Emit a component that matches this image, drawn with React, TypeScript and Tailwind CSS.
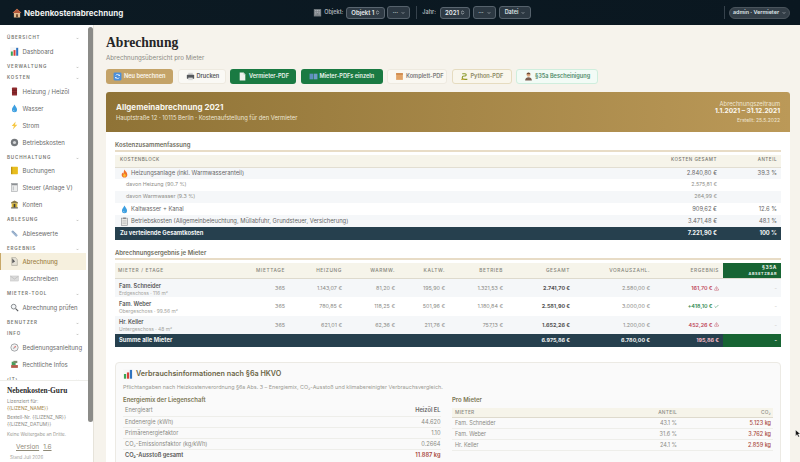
import { Check, ChevronDown, ChevronsUpDown, TriangleAlert } from "lucide-react";
import type { ReactNode } from "react";

const Svg = ({ children, className }: { children: ReactNode; className?: string }) => (
  <svg viewBox="0 0 16 16" className={className ?? "h-[9px] w-[9px] shrink-0"}>
    {children}
  </svg>
);

const Chart = ({ className }: { className?: string }) => (
  <Svg className={className}>
    <rect x="0.500" y="0.500" width="15" height="15" fill="#f6f6f6" />
    <rect x="1.500" y="8" width="3.500" height="7.500" fill="#3aa655" />
    <rect x="6.300" y="5.500" width="3.500" height="10" fill="#d9413a" />
    <rect x="11" y="1.500" width="3.500" height="14" fill="#2f74c0" />
  </Svg>
);
const House = () => (
  <Svg className="h-[10px] w-[10px] shrink-0">
    <path d="M8 1 1 8h2v7h10V8h2z" fill="#e2b98e" />
    <path d="M8 1 1 8h14z" fill="#b4583a" />
    <rect x="6.500" y="10" width="3" height="5" fill="#6d4a2e" />
  </Svg>
);
const Flame = () => (
  <Svg>
    <path d="M8 1c1 3 5 5 5 9a5 5 0 0 1-10 0c0-2 1-3 2-4 0 1 .5 2 1.200 2C6.500 6 7 3 8 1z" fill="#f0702a" />
    <path d="M8 8c1 1 2.500 2 2.500 3.500a2.500 2.500 0 0 1-5 0C5.500 10 7 9.500 8 8z" fill="#fbc02d" />
  </Svg>
);
const Drop = () => (
  <Svg>
    <path d="M8 1c2 3.500 4.500 6 4.500 9a4.500 4.500 0 0 1-9 0C3.500 7 6 4.500 8 1z" fill="#3d9fe0" />
    <path d="M6 10.500a2 2 0 0 0 2 2" stroke="#c4e6fb" strokeWidth="1" fill="none" />
  </Svg>
);
const Bolt = () => (
  <Svg>
    <path d="M10 1 3 9h4l-2 6 8-8.500H9z" fill="#f6c744" />
  </Svg>
);
const Gear = () => (
  <Svg>
    <circle cx="8" cy="8" r="6.500" fill="#74787c" />
    <circle cx="8" cy="8" r="2.800" fill="#d4d6d8" />
  </Svg>
);
const Oil = () => (
  <Svg>
    <rect x="3.500" y="1" width="9" height="14" rx="1" fill="#8f2a2e" />
    <rect x="3.500" y="5" width="9" height="1" fill="#571619" />
    <rect x="3.500" y="10" width="9" height="1" fill="#571619" />
  </Svg>
);
const Ledger = () => (
  <Svg>
    <rect x="2" y="1.500" width="12" height="13" rx="1" fill="#e8bd1e" />
    <rect x="2" y="1.500" width="2" height="13" fill="#b8900f" />
  </Svg>
);
const TaxForm = () => (
  <Svg>
    <rect x="3" y="1" width="10" height="14" fill="#eceded" stroke="#9a9ea2" strokeWidth="1" />
    <rect x="3" y="1" width="10" height="3" fill="#8c9094" />
    <rect x="5" y="6" width="1.500" height="7" fill="#b0b4b8" />
  </Svg>
);
const Vault = () => (
  <Svg>
    <path d="M8 1 2 4v2h12V4z" fill="#8a7a4a" />
    <rect x="3" y="6" width="10" height="7" fill="#d9b635" />
    <rect x="2" y="13" width="12" height="2" fill="#5e5a4e" />
    <rect x="6.500" y="7" width="3" height="6" fill="#40403a" />
  </Svg>
);
const Ruler = () => (
  <Svg>
    <path d="M2 5 5 2l9 9-3 3z" fill="#9cb4d0" />
    <path d="M5 5l1-1M7 7l1-1M9 9l1-1" stroke="#5c7392" strokeWidth="1" />
  </Svg>
);
const Script = () => (
  <Svg>
    <path d="M3 1h7l3 4v10H3z" fill="#e6e2d6" stroke="#8d8a80" strokeWidth="0.800" />
    <path d="M4 2v9l5-3-5-6z" fill="#5c5c5c" />
  </Svg>
);
const Envelope = () => (
  <Svg>
    <rect x="1" y="3.500" width="14" height="9" fill="#dcdcdc" stroke="#bdbdbd" strokeWidth="0.800" />
    <path d="M1 4l7 5 7-5" stroke="#a8a8a8" strokeWidth="0.800" fill="none" />
  </Svg>
);
const Search = () => (
  <Svg>
    <circle cx="6.500" cy="6.500" r="4.200" fill="#f4f6f8" stroke="#74787c" strokeWidth="1.500" />
    <path d="m10 10 4.500 4.500" stroke="#55585c" strokeWidth="2" />
  </Svg>
);
const Compass = () => (
  <Svg>
    <circle cx="8" cy="8" r="6.500" fill="#f2f2f2" stroke="#8b8f93" strokeWidth="1.300" />
    <path d="M11 5 9 9 7 7z" fill="#d9483f" />
    <path d="M5 11l2-4 2 2z" fill="#9aa0a6" />
  </Svg>
);
const Legal = () => (
  <Svg>
    <rect x="2" y="9" width="12" height="5" fill="#b55a4a" />
    <path d="M3 3h7v6H3z" fill="#46a05a" />
    <rect x="6" y="1.500" width="7" height="4" fill="#7b8c6a" />
  </Svg>
);
const Printer = () => (
  <Svg>
    <rect x="4" y="1.500" width="8" height="4" fill="#d4d4d4" />
    <rect x="1.500" y="5" width="13" height="7" rx="1" fill="#55585c" />
    <rect x="4" y="10" width="8" height="4.500" fill="#dcdcdc" />
  </Svg>
);
const Refresh = () => (
  <Svg>
    <rect x="1" y="1" width="14" height="14" rx="2" fill="#4a8fdc" />
    <path d="M11.500 6.500A4 4 0 0 0 4.800 6M4.500 9.500a4 4 0 0 0 6.700.5" stroke="#fff" strokeWidth="1.400" fill="none" />
    <path d="M12 3.800V7H9zM4 12.200V9h3z" fill="#fff" />
  </Svg>
);
const DocWhite = () => (
  <Svg>
    <path d="M3 1h7l3 3.500V15H3z" fill="#eef2ee" />
    <path d="M10 1v3.500h3z" fill="#a9bdaf" />
  </Svg>
);
const Books = () => (
  <Svg>
    <rect x="1" y="3" width="6.500" height="10" fill="#5f8fc0" />
    <rect x="8.500" y="3" width="6.500" height="10" fill="#6f9bc8" />
  </Svg>
);
const Box = () => (
  <Svg>
    <rect x="2" y="2" width="12" height="12" fill="#e2a468" />
    <rect x="2" y="2" width="12" height="3" fill="#cf8b4e" />
  </Svg>
);
const Snake = () => (
  <Svg>
    <path d="M4 3h5a2 2 0 0 1 0 4H7a3 3 0 0 0 0 6h6" stroke="#8a9a2c" strokeWidth="2" fill="none" />
    <path d="M2 13h6" stroke="#c9a93a" strokeWidth="2" />
  </Svg>
);
const Person = () => (
  <Svg>
    <circle cx="8" cy="5" r="3.500" fill="#e0ab85" />
    <path d="M4.500 4a3.500 3 0 0 1 7 0z" fill="#6e4a36" />
    <path d="M2 15c0-4 3-5.500 6-5.500s6 1.500 6 5.500z" fill="#7a5c4e" />
  </Svg>
);
const Building = () => (
  <Svg>
    <rect x="1.500" y="2" width="13" height="13" fill="#7c8287" />
    <path d="M4 4.500h2M7 4.500h2M10 4.500h2M4 7.500h2M7 7.500h2M10 7.500h2M4 10.500h2M10 10.500h2" stroke="#c8ccd0" strokeWidth="1.300" />
  </Svg>
);
const Clipboard = () => (
  <Svg>
    <rect x="2.500" y="2" width="11" height="13" fill="#e8e8e4" stroke="#84868a" strokeWidth="1" />
    <rect x="5.500" y="1" width="5" height="2.500" fill="#84868a" />
    <path d="M4.500 6.500h7M4.500 9h7M4.500 11.500h7" stroke="#a6a8aa" strokeWidth="0.800" />
  </Svg>
);

const navGroups: { label: string; items: { name: string; icon: ReactNode; active?: boolean }[] }[] = [
  { label: "Übersicht", items: [{ name: "Dashboard", icon: <Chart /> }] },
  { label: "Verwaltung", items: [] },
  {
    label: "Kosten",
    items: [
      { name: "Heizung / Heizöl", icon: <Oil /> },
      { name: "Wasser", icon: <Drop /> },
      { name: "Strom", icon: <Bolt /> },
      { name: "Betriebskosten", icon: <Gear /> },
    ],
  },
  {
    label: "Buchhaltung",
    items: [
      { name: "Buchungen", icon: <Ledger /> },
      { name: "Steuer (Anlage V)", icon: <TaxForm /> },
      { name: "Konten", icon: <Vault /> },
    ],
  },
  { label: "Ablesung", items: [{ name: "Ablesewerte", icon: <Ruler /> }] },
  {
    label: "Ergebnis",
    items: [
      { name: "Abrechnung", icon: <Script />, active: true },
      { name: "Anschreiben", icon: <Envelope /> },
    ],
  },
  { label: "Mieter-Tool", items: [{ name: "Abrechnung prüfen", icon: <Search /> }] },
  { label: "Benutzer", items: [] },
  {
    label: "Info",
    items: [
      { name: "Bedienungsanleitung", icon: <Compass /> },
      { name: "Rechtliche Infos", icon: <Legal /> },
    ],
  },
  { label: "(IT)", items: [] },
];

const tenants = [
  ["Fam. Schneider", "Erdgeschoss · 116 m²", "365", "1.143,07 €", "81,20 €", "195,90 €", "1.321,53 €", "2.741,70 €", "2.580,00 €", "161,70 €"],
  ["Fam. Weber", "Obergeschoss · 99.56 m²", "365", "780,85 €", "118,25 €", "501,96 €", "1.180,84 €", "2.581,90 €", "3.000,00 €", "+418,10 €"],
  ["Hr. Keller", "Untergeschoss · 48 m²", "365", "621,01 €", "62,36 €", "211,76 €", "757,13 €", "1.652,26 €", "1.200,00 €", "452,26 €"],
];

const energy = [
  ["Energieart", "Heizöl EL"],
  ["Endenergie (kWh)", "44.620"],
  ["Primärenergiefaktor", "1.10"],
  ["CO₂-Emissionsfaktor (kg/kWh)", "0.2664"],
];

const Selector = ({ label, className }: { label: string; className: string }) => (
  <span className={`flex h-[12px] items-center justify-between rounded-[3px] border border-[#5a6670] bg-[#2e3a44] px-[4px] text-[6px] font-semibold text-[#e8ecee] ${className}`}>
    {label}
    <ChevronsUpDown className="h-[5px] w-[5px]" strokeWidth={3} />
  </span>
);

const Menu = ({ label, className }: { label: string; className: string }) => (
  <span className={`flex h-[13px] items-center justify-center gap-[3px] rounded-[3px] border border-[#56626c] bg-[#2c3842] text-[5.500px] font-semibold text-[#dfe4e6] ${className}`}>
    {label}
    <ChevronDown className="h-[4px] w-[4px]" strokeWidth={3} />
  </span>
);

const ActionButton = ({ icon, label, className }: { icon: ReactNode; label: string; className: string }) => (
  <span className={`flex h-[15px] items-center gap-[2px] whitespace-nowrap rounded-[3px] text-[5.600px] font-semibold ${className}`}>
    {icon}
    {label}
  </span>
);

const SectionTitle = ({ children }: { children: ReactNode }) => (
  <div className="border-b-2 border-[#e8dcc6] pb-[1px] text-[6px] font-semibold leading-[8px] text-[#6f6e60]">{children}</div>
);

const App = () => {
  return (
    <div className="relative flex h-[462px] w-[800px] flex-col overflow-hidden bg-[#f6f3ec] font-['Inter',sans-serif] text-[#555]">
      <header className="flex h-[25px] shrink-0 items-center bg-gradient-to-r from-[#0c1a23] to-[#0a1720] pl-[12px] pr-[10px]">
        <House />
        <span className="ml-[2px] text-[8px] font-bold text-[#eef0f0]">Nebenkostenabrechnung</span>
        <div className="ml-auto flex items-center">
          <Building />
          <span className="ml-[2px] text-[5.500px] font-semibold text-[#aab2b8]">Objekt:</span>
          <Selector label="Objekt 1" className="ml-[3px] w-[39px]" />
          <Menu label="···" className="ml-[2px] w-[23px]" />
          <span className="ml-[6px] h-[13px] w-px bg-[#36424c]" />
          <span className="ml-[5px] text-[5.500px] font-semibold text-[#aab2b8]">Jahr:</span>
          <Selector label="2021" className="ml-[4px] w-[30px]" />
          <Menu label="···" className="ml-[3px] w-[23px]" />
          <Menu label="Datei" className="ml-[3px] w-[32px]" />
          <span className="ml-[193px] h-[13px] w-px bg-[#36424c]" />
          <span className="ml-[4px] flex h-[12px] w-[61px] items-center justify-center gap-[3px] rounded-full border border-[#4a545c] bg-[#333e47] text-[5.400px] font-semibold text-[#dfe4e6]">
            admin · Vermieter
            <ChevronDown className="h-[4px] w-[4px]" strokeWidth={3} />
          </span>
        </div>
      </header>

      <div className="flex min-h-0 flex-1">
        <aside className="flex w-[94px] shrink-0 border-r border-[#e6e3da] bg-white">
          <div className="flex w-[88px] shrink-0 flex-col">
            <nav className="min-h-0 flex-1 overflow-hidden pt-[6px]">
              {navGroups.map((group) => (
                <div key={group.label}>
                  <div className="mt-[3.500px] flex h-[8px] items-center justify-between pl-[7px] pr-[9px] text-[4.500px] font-semibold uppercase tracking-[0.85px] text-[#77776f]">
                    {group.label}
                    <ChevronDown className="h-[3px] w-[3px]" strokeWidth={3} />
                  </div>
                  {group.items.map((item) => (
                    <div
                      key={item.name}
                      className={`flex h-[17px] items-center gap-[3.500px] text-[6px] ${
                        item.active
                          ? "mr-[2px] border-l border-[#c8a868] bg-[#f6f0de] pl-[9px] font-medium text-[#a08246]"
                          : "pl-[10px] text-[#6a6a6a]"
                      }`}
                    >
                      {item.icon}
                      {item.name}
                    </div>
                  ))}
                </div>
              ))}
            </nav>
            <div className="h-[82px] shrink-0 border-t border-[#eeeeea] bg-white pl-[7px] pt-[5px]">
              <div className="font-['Liberation_Serif',serif] text-[7.400px] font-bold leading-[9px] text-[#2a2a2a]">Nebenkosten-Guru</div>
              <div className="mt-[3px] text-[4.800px] leading-[7.400px] text-[#8a8a84]">
                Lizenziert für:
                <br />
                <span className="text-[#a08246]">{"{{LIZENZ_NAME}}"}</span>
              </div>
              <div className="mt-[1px] text-[4.800px] leading-[7.400px] text-[#8a8a84]">
                Bestell-Nr. {"{{LIZENZ_NR}}"}
                <br />
                {"{{LIZENZ_DATUM}}"}
              </div>
              <div className="mt-[2px] text-[4.600px] leading-[7px] text-[#9a9a94]">Keine Weitergabe an Dritte.</div>
              <div className="ml-[9px] mt-[5px] flex gap-[4px] text-[6.500px] leading-[9px] text-[#8f8a78]">
                <span className="underline">Version</span>
                <span className="underline">1.6</span>
              </div>
              <div className="ml-[3px] mt-[3px] text-[4.500px] text-[#a4a49e]">Stand Juli 2026</div>
            </div>
          </div>
          <div className="mt-[2px] h-[395px] w-[5px] rounded-full bg-[#8b8b88]" />
        </aside>

        <main className="min-w-0 flex-1 pl-[12px] pr-[10px] pt-[11px]">
          <h1 className="font-['Liberation_Serif',serif] text-[13.600px] font-bold leading-[14px] text-[#262626]">Abrechnung</h1>
          <p className="mt-[3.500px] text-[6.200px] leading-[8px] text-[#8a8a84]">Abrechnungsübersicht pro Mieter</p>

          <div className="mt-[7.500px] flex gap-[4.500px]">
            <ActionButton icon={<Refresh />} label="Neu berechnen" className="w-[67px] bg-[#c4a368] pl-[7px] text-[#fdfaf2]" />
            <ActionButton icon={<Printer />} label="Drucken" className="w-[48px] border border-[#eeeae0] bg-[#faf9f5] pl-[7px] font-medium text-[#555]" />
            <ActionButton icon={<DocWhite />} label="Vermieter-PDF" className="w-[66px] bg-[#1a7a42] pl-[8px] text-[#eef6f0]" />
            <ActionButton icon={<Books />} label="Mieter-PDFs einzeln" className="w-[82px] bg-[#1a7a42] pl-[8px] text-[#eef6f0]" />
            <ActionButton icon={<Box />} label="Komplett-PDF" className="w-[60px] border border-[#eeeae0] bg-[#faf8f2] pl-[7px] font-medium text-[#777]" />
            <ActionButton icon={<Snake />} label="Python-PDF" className="w-[60px] border border-[#e6dcc0] bg-[#f9f6ec] pl-[7px] font-medium text-[#8a8660]" />
            <ActionButton icon={<Person />} label="§35a Bescheinigung" className="w-[82px] border border-[#cfeedd] bg-[#f2fbf6] pl-[7px] font-medium text-[#4f8a68]" />
          </div>

          <section className="mt-[8px] rounded-t-[3px] bg-white">
            <div className="flex h-[40px] items-center justify-between rounded-t-[3px] bg-gradient-to-r from-[#8f7336] to-[#bb9958] pl-[10px] pr-[10px]">
              <div>
                <div className="text-[8px] font-bold leading-[11px] text-[#f8f6ee]">Allgemeinabrechnung 2021</div>
                <div className="mt-[1px] text-[5.800px] leading-[8px] text-[#ede6d4]">Hauptstraße 12 · 10115 Berlin · Kostenaufstellung für den Vermieter</div>
              </div>
              <div className="text-right">
                <div className="text-[5.800px] leading-[8px] text-[#efe6d2]">Abrechnungszeitraum</div>
                <div className="text-[6.600px] font-bold leading-[7px] text-[#fbf8f0]">1.1.2021 – 31.12.2021</div>
                <div className="mt-[2px] text-[5px] leading-[7px] text-[#efe6d2]">Erstellt: 25.5.2022</div>
              </div>
            </div>

            <div className="px-[9px] pt-[9px]">
              <SectionTitle>Kostenzusammenfassung</SectionTitle>
              <table className="mt-[3px] w-full table-fixed border-collapse text-[5.800px] text-[#666]">
                <thead>
                  <tr className="h-[12px] border-b border-[#e2ded2] bg-[#f6f4ea] text-[4.600px] font-medium uppercase tracking-[0.5px] text-[#77776f]">
                    <th className="pl-[5px] text-left font-medium">Kostenblock</th>
                    <th className="w-[120px] pr-[4px] text-right font-medium">Kosten gesamt</th>
                    <th className="w-[60px] pr-[4px] text-right font-medium">Anteil</th>
                  </tr>
                </thead>
                <tbody>
                  <tr className="h-[12px] bg-[#f5f7f9]">
                    <td className="pl-[5px]">
                      <span className="flex items-center gap-[2px]">
                        <Flame />
                        Heizungsanlage (inkl. Warmwasseranteil)
                      </span>
                    </td>
                    <td className="pr-[4px] text-right">2.840,80 €</td>
                    <td className="pr-[4px] text-right">39.3 %</td>
                  </tr>
                  <tr className="h-[12px] text-[5.300px] text-[#8e8e88]">
                    <td className="pl-[11px]">davon Heizung (90.7 %)</td>
                    <td className="pr-[4px] text-right">2.575,81 €</td>
                    <td />
                  </tr>
                  <tr className="h-[12px] bg-[#f5f7f9] text-[5.300px] text-[#8e8e88]">
                    <td className="pl-[11px]">davon Warmwasser (9.3 %)</td>
                    <td className="pr-[4px] text-right">264,99 €</td>
                    <td />
                  </tr>
                  <tr className="h-[12px]">
                    <td className="pl-[5px]">
                      <span className="flex items-center gap-[2px]">
                        <Drop />
                        Kaltwasser + Kanal
                      </span>
                    </td>
                    <td className="pr-[4px] text-right">909,62 €</td>
                    <td className="pr-[4px] text-right">12.6 %</td>
                  </tr>
                  <tr className="h-[12px] bg-[#f5f7f9]">
                    <td className="pl-[5px]">
                      <span className="flex items-center gap-[2px]">
                        <Clipboard />
                        Betriebskosten (Allgemeinbeleuchtung, Müllabfuhr, Grundsteuer, Versicherung)
                      </span>
                    </td>
                    <td className="pr-[4px] text-right">3.471,48 €</td>
                    <td className="pr-[4px] text-right">48.1 %</td>
                  </tr>
                  <tr className="h-[12.500px] bg-[#26404e] font-bold text-[#f4f6f6]">
                    <td className="pl-[5px]">Zu verteilende Gesamtkosten</td>
                    <td className="pr-[4px] text-right">7.221,90 €</td>
                    <td className="pr-[4px] text-right">100 %</td>
                  </tr>
                </tbody>
              </table>

              <div className="mt-[9px]">
                <SectionTitle>Abrechnungsergebnis je Mieter</SectionTitle>
              </div>
              <table className="mt-[3px] w-full table-fixed border-collapse text-[5.400px] text-[#8a8a86]">
                <thead>
                  <tr className="h-[16px] border-b border-[#dedacd] bg-[#f6f4ea] text-[4.800px] font-medium uppercase tracking-[0.6px] text-[#86867c]">
                    <th className="w-[129px] pl-[3px] text-left font-medium">Mieter / Etage</th>
                    <th className="w-[45px] pr-[4px] text-right font-medium">Miettage</th>
                    <th className="w-[57px] pr-[4px] text-right font-medium">Heizung</th>
                    <th className="w-[53px] pr-[4px] text-right font-medium">Warmw.</th>
                    <th className="w-[50px] pr-[4px] text-right font-medium">Kaltw.</th>
                    <th className="w-[58px] pr-[4px] text-right font-medium">Betrieb</th>
                    <th className="w-[67px] pr-[4px] text-right font-medium">Gesamt</th>
                    <th className="w-[80px] pr-[4px] text-right font-medium">Vorauszahl.</th>
                    <th className="w-[69px] pr-[4px] text-right font-medium">Ergebnis</th>
                    <th className="bg-[#176433] pr-[4px] text-right font-bold leading-[6px] text-[#eef4ee]">
                      §35a
                      <br />
                      <span className="text-[3.800px]">absetzbar</span>
                    </th>
                  </tr>
                </thead>
                <tbody>
                  {tenants.map((t, i) => (
                    <tr key={t[0]} className={`h-[18.600px] ${i % 2 === 0 ? "bg-[#f5f7f9]" : ""}`}>
                      <td className="pl-[4px] pt-[2px]">
                        <div className="text-[5.600px] font-semibold leading-[8px] text-[#555]">{t[0]}</div>
                        <div className="text-[4.900px] leading-[7px] text-[#a4a49e]">{t[1]}</div>
                      </td>
                      {t.slice(2, 7).map((v, j) => (
                        <td key={j} className="pr-[4px] text-right">
                          {v}
                        </td>
                      ))}
                      <td className="pr-[4px] text-right font-bold text-[#555]">{t[7]}</td>
                      <td className="pr-[4px] text-right">{t[8]}</td>
                      <td className={`pr-[4px] font-semibold ${i === 1 ? "text-[#2f8a50]" : "text-[#c0485a]"}`}>
                        <span className="flex items-center justify-end gap-[1.500px]">
                          {t[9]}
                          {i === 1 ? (
                            <Check className="h-[5px] w-[5px]" strokeWidth={2.500} />
                          ) : (
                            <TriangleAlert className="h-[5px] w-[5px]" strokeWidth={2} />
                          )}
                        </span>
                      </td>
                      <td className="pr-[4px] text-right text-[#c8c8c4]">-</td>
                    </tr>
                  ))}
                  <tr className="h-[12.500px] bg-[#26404e] font-bold text-[#f0f3f3]">
                    <td className="pl-[4px] text-[5.900px]">Summe alle Mieter</td>
                    <td colSpan={5} />
                    <td className="pr-[4px] text-right">6.975,86 €</td>
                    <td className="pr-[4px] text-right">6.780,00 €</td>
                    <td className="pr-[4px] text-right text-[#f2b8c4]">195,86 €</td>
                    <td className="bg-[#176433] pr-[4px] text-right">-</td>
                  </tr>
                </tbody>
              </table>

              <div className="mt-[15px] h-[120px] rounded-[4px] border border-[#eceae4] bg-[#fafafa] px-[7px] pt-[5px]">
                <div className="flex items-center gap-[3px] text-[7.200px] font-semibold leading-[12px] text-[#6b6546]">
                  <Chart className="h-[10px] w-[10px] shrink-0" />
                  Verbrauchsinformationen nach §6a HKVO
                </div>
                <p className="mt-[3px] text-[5.400px] leading-[8px] text-[#9a9a94]">
                  Pflichtangaben nach Heizkostenverordnung §6a Abs. 3 – Energiemix, CO₂-Ausstoß und klimabereinigter Verbrauchsvergleich.
                </p>
                <div className="mt-[5px] grid grid-cols-[318px_1fr] gap-[11px]">
                  <div>
                    <div className="mb-[1.500px] text-[6px] font-semibold leading-[8px] text-[#7b7654]">Energiemix der Liegenschaft</div>
                    <table className="w-full border-collapse text-[5.700px] text-[#8a8a84]">
                      <tbody>
                        {energy.map((row, i) => (
                          <tr key={row[0]} className="h-[11px] border-b border-[#eeeeea]">
                            <td className="pl-[2px]">{row[0]}</td>
                            <td className={`pr-[0.500px] text-right ${i === 0 ? "font-semibold text-[#666]" : ""}`}>{row[1]}</td>
                          </tr>
                        ))}
                        <tr className="h-[11px] font-semibold">
                          <td className="pl-[2px] text-[#555]">CO₂-Ausstoß gesamt</td>
                          <td className="pr-[0.500px] text-right text-[#a8483c]">11.887 kg</td>
                        </tr>
                      </tbody>
                    </table>
                  </div>
                  <div>
                    <div className="mb-[4px] text-[6px] font-semibold leading-[8px] text-[#7b7654]">Pro Mieter</div>
                    <table className="w-full border-collapse text-[5.500px] text-[#8a8a84]">
                      <thead>
                        <tr className="h-[9.500px] border-b border-[#dedacd] bg-[#f6f4ea] text-[4.800px] uppercase tracking-[0.3px]">
                          <th className="pl-[3px] text-left font-medium">Mieter</th>
                          <th className="pr-[2px] text-right font-medium">Anteil</th>
                          <th className="w-[94px] pr-[2px] text-right font-medium normal-case">CO₂</th>
                        </tr>
                      </thead>
                      <tbody>
                        {[
                          ["Fam. Schneider", "43.1 %", "5.123 kg"],
                          ["Fam. Weber", "31.6 %", "3.762 kg"],
                          ["Hr. Keller", "24.1 %", "2.859 kg"],
                        ].map((r) => (
                          <tr key={r[0]} className="h-[11px] border-b border-[#eeeeea]">
                            <td className="pl-[3px]">{r[0]}</td>
                            <td className="pr-[2px] text-right">{r[1]}</td>
                            <td className="pr-[2px] text-right font-medium text-[#a8483c]">{r[2]}</td>
                          </tr>
                        ))}
                      </tbody>
                    </table>
                  </div>
                </div>
              </div>
            </div>
          </section>
        </main>
      </div>

      <svg viewBox="0 0 10 14" className="absolute left-[795px] top-[429px] h-[9px] w-[6px]">
        <path d="M1 1v10l2.500-2.200L5.500 13l1.800-.8-2-4.200H9z" fill="#111" stroke="#fff" strokeWidth="0.600" />
      </svg>
    </div>
  );
};

export default App;
